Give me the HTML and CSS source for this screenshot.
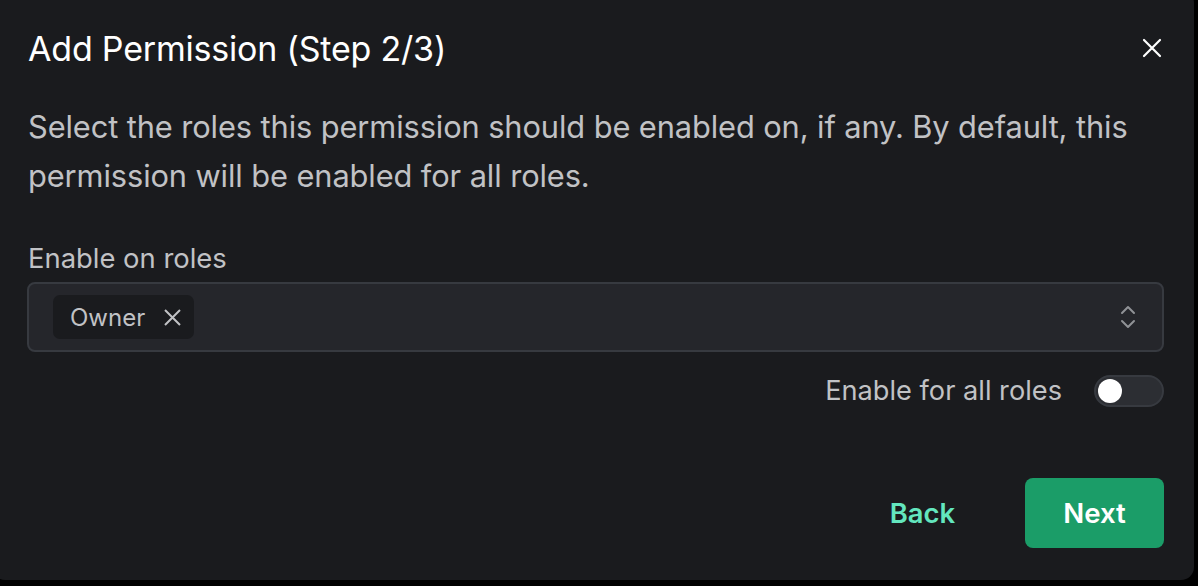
FILE: index.html
```html
<!DOCTYPE html>
<html>
<head>
<meta charset="utf-8">
<link rel="stylesheet" href="styles.css">
</head>
<body>
<div class="modal">
  <div class="header">
    <h2 class="title">Add Permission (Step 2/3)</h2>
    <button class="close" aria-label="Close">
      <svg width="22" height="22" viewBox="0 0 22 22"><path d="M3 3 L19 19 M19 3 L3 19" stroke="#fff" stroke-width="2.2" stroke-linecap="round"/></svg>
    </button>
  </div>
  <p class="desc">Select the roles this permission should be enabled on, if any. By default, this permission will be enabled for all roles.</p>
  <div class="field">
    <label class="label">Enable on roles</label>
    <div class="input">
      <div class="pill"><span>Owner</span>
        <svg width="19" height="19" viewBox="0 0 19 19"><path d="M2 2 L17 17 M17 2 L2 17" stroke="#c1c2c5" stroke-width="2"/></svg>
      </div>
      <svg class="chev" width="16" height="24" viewBox="0 0 16 24"><path d="M2 8 L8 2 L14 8 M2 16 L8 22 L14 16" fill="none" stroke="#909296" stroke-width="2" stroke-linecap="round" stroke-linejoin="round"/></svg>
    </div>
  </div>
  <div class="switch-row">
    <span class="switch-label">Enable for all roles</span>
    <span class="switch"><span class="thumb"></span></span>
  </div>
  <div class="footer">
    <button class="btn-back">Back</button>
    <button class="btn-next">Next</button>
  </div>
</div>
</body>
</html>
```
FILE: styles.css
```css
html, body {
  margin: 0;
  padding: 0;
  background: #000;
  height: 100%;
  overflow: hidden;
}
body {
  font-family: Inter, "Noto Sans", sans-serif;
}
.modal {
  box-sizing: border-box;
  width: 1202px;
  height: 590px;
  margin-left: -8px;
  margin-top: -10px;
  background: #1a1b1e;
  border-radius: 13px;
  padding: 10px 30px 0 36px;
  display: flex;
  flex-direction: column;
}
.header {
  display: flex;
  align-items: center;
  justify-content: space-between;
  height: 96px;
}
.title {
  margin: 0;
  font-size: 34px;
  font-weight: 400;
  color: #fff;
  letter-spacing: -0.2px;
}
.close {
  background: none;
  border: 0;
  padding: 0;
  margin-right: 1px;
  display: flex;
}
.desc {
  margin: 6px 0 0;
  font-size: 30.8px;
  line-height: 49px;
  color: #c1c2c5;
  letter-spacing: -0.1px;
}
.field {
  margin-top: 41px;
  display: flex;
  flex-direction: column;
}
.label {
  font-size: 27.4px;
  color: #c1c2c5;
  line-height: 34px;
  margin-bottom: 7px;
}
.input {
  box-sizing: border-box;
  height: 70px;
  margin-left: -1px;
  border: 2px solid #373a40;
  background: #25262b;
  border-radius: 8px;
  display: flex;
  align-items: center;
  justify-content: space-between;
  padding: 0 26px 0 24px;
}
.pill {
  display: flex;
  align-items: center;
  gap: 18px;
  background: #1a1b1e;
  border-radius: 7px;
  height: 44px;
  padding: 0 12px 0 17px;
  font-size: 24px;
  color: #c1c2c5;
}
.switch-row {
  margin-top: 22px;
  display: flex;
  justify-content: flex-end;
  align-items: center;
  gap: 32px;
}
.switch-label {
  font-size: 27.2px;
  color: #c1c2c5;
}
.switch {
  box-sizing: border-box;
  width: 70px;
  height: 32px;
  border-radius: 16px;
  background: #2c2e33;
  border: 2px solid #373a40;
  display: flex;
  align-items: center;
  padding-left: 2px;
}
.thumb {
  width: 24px;
  height: 24px;
  border-radius: 50%;
  background: #fff;
}
.footer {
  margin-top: 71px;
  display: flex;
  justify-content: flex-end;
  align-items: center;
  gap: 70px;
}
.btn-back {
  background: none;
  border: 0;
  padding: 0;
  font-family: inherit;
  font-size: 27.4px;
  font-weight: 600;
  color: #63e6be;
}
.btn-next {
  width: 139px;
  height: 70px;
  border: 0;
  border-radius: 8px;
  background: #1b9d68;
  color: #fff;
  font-family: inherit;
  font-size: 27.6px;
  font-weight: 600;
}
```
